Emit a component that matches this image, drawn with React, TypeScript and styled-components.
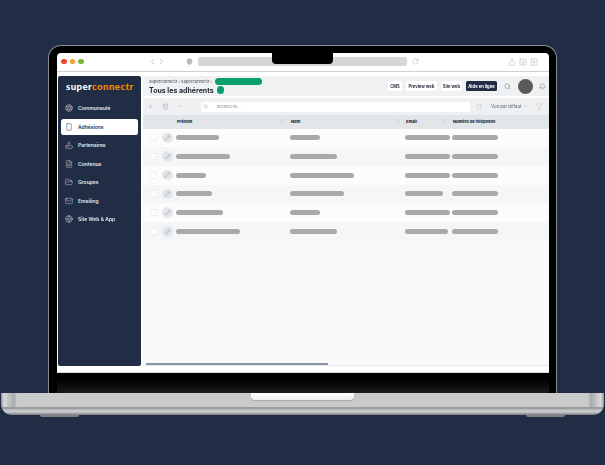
import styled, { createGlobalStyle } from "styled-components";
import {
  Aperture,
  ChevronDown,
  ChevronLeft,
  ChevronRight,
  Bell,
  Filter,
  FileText,
  Globe,
  HardDriveDownload,
  Mail,
  Minus,
  Pencil,
  Plus,
  RotateCw,
  Search,
  Share,
  Shield,
  Smartphone,
  SquareArrowDown,
  SquarePlus,
  Trash2,
  FolderOpen,
} from "lucide-react";

const GlobalStyle = createGlobalStyle`
  html, body {
    margin: 0;
    padding: 0;
    background: #212d45;
  }
  * {
    box-sizing: border-box;
  }
`;

const Page = styled.div`
  width: 605px;
  height: 465px;
  padding-top: 45px;
  background: #212d45;
  display: flex;
  flex-direction: column;
  align-items: center;
  overflow: hidden;
  font-family: "Inter", "Liberation Sans", sans-serif;
`;

const Lid = styled.div`
  position: relative;
  width: 509px;
  height: 348px;
  padding: 7px 7px 0 8px;
  background: #000;
  border: 1px solid #8b8f95;
  border-bottom: 0;
  border-radius: 13px 13px 0 0;
  display: flex;
  flex-direction: column;
`;

const Notch = styled.div`
  position: absolute;
  top: 0;
  left: 223px;
  width: 61px;
  height: 18px;
  background: #000;
  border-radius: 0 0 4px 4px;
  z-index: 2;
`;

const Screen = styled.div`
  height: 320px;
  background: #fff;
  border-radius: 4px 4px 0 0;
  display: flex;
  flex-direction: column;
  overflow: hidden;
  filter: blur(0.25px);
`;

const TitleBar = styled.div`
  height: 19px;
  flex-shrink: 0;
  border-bottom: 1px solid #cfcfcf;
  display: flex;
  align-items: center;
  padding: 0 11px 1px 4px;
  color: #8a8a8a;
`;

const Dot = styled.span<{ $c: string }>`
  width: 5.5px;
  height: 5.5px;
  margin-right: 3px;
  border-radius: 50%;
  background: ${(p) => p.$c};
`;

const NavArrows = styled.div`
  display: flex;
  margin-left: 61px;
  margin-right: 20px;
`;

const UrlBar = styled.div`
  width: 209px;
  height: 9px;
  margin: 0 5px 0 5px;
  border-radius: 2px;
  background: #d6d6d6;
`;

const WindowIcons = styled.div`
  margin-left: auto;
  display: flex;
  gap: 3px;
  color: #8c8c8c;
`;

const Body = styled.div`
  flex: 1;
  min-height: 0;
  display: flex;
  padding: 4px 0 6px 1px;
  border-bottom: 1px solid #dcdcdc;
`;

const Sidebar = styled.aside`
  width: 83px;
  flex-shrink: 0;
  background: #212d45;
  border-radius: 2px;
  padding: 0 3px;
`;

const Logo = styled.div`
  height: 24px;
  padding: 4px 0 0 5px;
  color: #fff;
  font-family: "Lato", sans-serif;
  font-size: 9.6px;
  font-weight: 900;
  letter-spacing: 0.45px;
  white-space: nowrap;
  line-height: 14px;
`;

const LogoAccent = styled.span`
  color: #f18a00;
`;

const NavList = styled.nav`
  display: flex;
  flex-direction: column;
  gap: 2.5px;
`;

const NavItem = styled.div<{ $active?: boolean }>`
  height: 16px;
  padding-left: 3.5px;
  display: flex;
  align-items: center;
  gap: 5.5px;
  border-radius: 2.5px;
  background: ${(p) => (p.$active ? "#fff" : "transparent")};
  color: ${(p) => (p.$active ? "#2b3550" : "#e6e8ec")};
  font-size: 5px;
  font-weight: 600;
  white-space: nowrap;
`;

const Main = styled.main`
  flex: 1;
  min-width: 0;
  margin-left: 2px;
  display: flex;
  flex-direction: column;
`;

const Header = styled.header`
  height: 20px;
  background: #f0f1f2;
  display: flex;
  align-items: center;
  padding: 0 3px 0 6px;
`;

const Titles = styled.div`
  display: flex;
  flex-direction: column;
  gap: 1px;
`;

const Crumbs = styled.div`
  display: flex;
  align-items: center;
  gap: 2.5px;
  height: 7px;
  color: #555c68;
  font-size: 4px;
  font-weight: 500;
  white-space: nowrap;
`;

const GreenPill = styled.span`
  width: 47px;
  height: 7px;
  flex-shrink: 0;
  border-radius: 3.5px;
  background: #0a9e6e;
`;

const TitleRow = styled.div`
  display: flex;
  align-items: center;
  gap: 3px;
  color: #252c3a;
  font-size: 7px;
  font-weight: 700;
  white-space: nowrap;
`;

const GreenDot = styled.span`
  width: 7.5px;
  height: 7.5px;
  flex-shrink: 0;
  border-radius: 50%;
  background: #0a9e6e;
`;

const HeaderActions = styled.div`
  margin-left: auto;
  display: flex;
  align-items: center;
  color: #5f6670;
`;

const ActionButton = styled.button<{ $dark?: boolean; $w: number }>`
  width: ${(p) => p.$w}px;
  height: 10px;
  padding: 0;
  margin-right: 4px;
  border: 0;
  border-radius: 1.5px;
  background: ${(p) => (p.$dark ? "#212d45" : "#fff")};
  color: ${(p) => (p.$dark ? "#fff" : "#2c3340")};
  font-family: inherit;
  font-size: 4.2px;
  font-weight: 700;
  white-space: nowrap;
`;

const SearchSlot = styled.span`
  margin-left: 3px;
  display: flex;
`;

const Avatar = styled.span`
  width: 15px;
  height: 15px;
  margin: 0 6px 0 7px;
  border-radius: 50%;
  background: #5a5a5a;
`;

const Toolbar = styled.div`
  height: 17px;
  flex-shrink: 0;
  margin-top: 2px;
  background: #eef0f2;
  display: flex;
  align-items: center;
  padding: 0 6px 0 4px;
  color: #a6acb4;
`;

const ToolIcons = styled.div`
  width: 54px;
  display: flex;
  gap: 8px;
`;

const SearchBox = styled.div`
  width: 270px;
  height: 10px;
  padding-left: 2px;
  background: #fff;
  border-radius: 1.5px;
  display: flex;
  align-items: center;
  gap: 9px;
  color: #8a8f98;
  font-size: 4px;
`;

const RefreshSlot = styled.span`
  margin-left: 6px;
  display: flex;
`;

const ViewPicker = styled.div`
  margin: 0 7px 0 9px;
  display: flex;
  align-items: center;
  gap: 1.5px;
  color: #737a85;
  font-size: 4.3px;
  font-weight: 500;
  white-space: nowrap;
`;

const columns = "12px 14px 114px 115px 47px 1fr";

const HeadRow = styled.div`
  height: 13.5px;
  flex-shrink: 0;
  padding-left: 7px;
  background: #e3e6e9;
  display: grid;
  grid-template-columns: ${columns};
  align-items: center;
  color: #252c3a;
  font-size: 4px;
  font-weight: 800;
  white-space: nowrap;
`;

const HeadCell = styled.div<{ $col: number }>`
  grid-column: ${(p) => p.$col};
  padding: 0 5px 0 1px;
  display: flex;
  align-items: center;
  justify-content: space-between;
`;

const TableBody = styled.div`
  flex: 1;
  background: #fafafa;
  display: flex;
  flex-direction: column;
`;

const Row = styled.div<{ $odd: boolean }>`
  height: 18.7px;
  padding-left: 7px;
  background: ${(p) => (p.$odd ? "#f5f6f8" : "#fcfcfc")};
  display: grid;
  grid-template-columns: ${columns};
  align-items: center;
`;

const Check = styled.span`
  width: 7px;
  height: 7px;
  background: #fff;
  border: 0.5px solid #eceef0;
  border-radius: 1px;
`;

const EditButton = styled.span`
  width: 10.5px;
  height: 10.5px;
  border-radius: 50%;
  background: #e4e7ea;
  color: #858a93;
  display: flex;
  align-items: center;
  justify-content: center;
`;

const Bar = styled.span<{ $w: number }>`
  display: block;
  width: ${(p) => p.$w}px;
  height: 5px;
  border-radius: 2.5px;
  background: #a9a9a9;
`;

const ScrollTrack = styled.div`
  height: 7px;
  padding: 4px 0 0 3px;
  background: #fafafa;
  border-bottom: 1px solid #e6e8ec;
`;

const ScrollThumb = styled.div`
  width: 182px;
  height: 2px;
  background: #8a97a8;
`;

const Chin = styled.div`
  flex: 1;
  background: linear-gradient(#000 0, #000 30%, #1b1b1b 100%);
`;

const Base = styled.div`
  width: 603px;
  height: 22px;
  flex-shrink: 0;
  display: flex;
  justify-content: center;
  border-radius: 0 0 11px 11px;
  background: linear-gradient(
      90deg,
      #8f9194 0,
      #d9dadb 3px,
      #a9abad 13px,
      #c9caca 16px,
      #c9caca calc(100% - 16px),
      #a9abad calc(100% - 13px),
      #d9dadb calc(100% - 3px),
      #8f9194 100%
    )
    top / 100% 14px no-repeat,
    linear-gradient(#c8c9c9 0, #c8c9c9 13px, #8d8e90 15px, #c4c5c6 17px, #c9cacb 19px, #77797c 22px);
`;

const Opening = styled.div`
  width: 103px;
  height: 7px;
  border-radius: 0 0 4px 4px;
  background: linear-gradient(#fff, #eeeeee);
  box-shadow: 0 0.5px 1px #8b8b8b;
`;

const Feet = styled.div`
  width: 603px;
  padding: 0 39px;
  display: flex;
  justify-content: space-between;
`;

const Foot = styled.span`
  width: 39px;
  height: 2px;
  border-radius: 0 0 6px 6px;
  background: #7d8085;
`;

const navItems = [
  { label: "Communauté", Icon: Aperture },
  { label: "Adhésions", Icon: Smartphone, active: true },
  { label: "Partenaires", Icon: HardDriveDownload },
  { label: "Contenus", Icon: FileText },
  { label: "Groupes", Icon: FolderOpen },
  { label: "Emailing", Icon: Mail },
  { label: "Site Web & App", Icon: Globe },
];

const rows = [
  [43, 30, 45, 46],
  [54, 47, 45, 46],
  [30, 64, 45, 46],
  [36, 54, 38, 46],
  [47, 30, 45, 46],
  [64, 47, 43, 46],
];

function App() {
  return (
    <Page>
      <GlobalStyle />
      <Lid>
        <Notch />
        <Screen>
          <TitleBar>
            <Dot $c="#f04438" />
            <Dot $c="#f59e2c" />
            <Dot $c="#7cb82f" />
            <NavArrows>
              <ChevronLeft size={9} strokeWidth={1.3} />
              <ChevronRight size={9} strokeWidth={1.3} />
            </NavArrows>
            <Shield size={7} strokeWidth={1.4} fill="#bdbdbd" />
            <UrlBar />
            <RotateCw size={7} strokeWidth={1.1} />
            <WindowIcons>
              <Share size={8} strokeWidth={1.1} />
              <SquareArrowDown size={8} strokeWidth={1.1} />
              <SquarePlus size={8} strokeWidth={1.1} />
            </WindowIcons>
          </TitleBar>
          <Body>
            <Sidebar>
              <Logo>
                super<LogoAccent>connectr</LogoAccent>
              </Logo>
              <NavList>
                {navItems.map(({ label, Icon, active }) => (
                  <NavItem key={label} $active={active}>
                    <Icon size={8} strokeWidth={1.3} />
                    {label}
                  </NavItem>
                ))}
              </NavList>
            </Sidebar>
            <Main>
              <Header>
                <Titles>
                  <Crumbs>
                    Superconnectr › Superconnectr ›<GreenPill />
                  </Crumbs>
                  <TitleRow>
                    Tous les adhérents
                    <GreenDot />
                  </TitleRow>
                </Titles>
                <HeaderActions>
                  <ActionButton $w={14}>CMS</ActionButton>
                  <ActionButton $w={31}>Preview web</ActionButton>
                  <ActionButton $w={21}>Site web</ActionButton>
                  <ActionButton $w={31} $dark>
                    Aide en ligne
                  </ActionButton>
                  <SearchSlot>
                    <Search size={7} strokeWidth={1.4} />
                  </SearchSlot>
                  <Avatar />
                  <Bell size={7} strokeWidth={1.4} />
                </HeaderActions>
              </Header>
              <Toolbar>
                <ToolIcons>
                  <Plus size={7} strokeWidth={1.4} />
                  <Trash2 size={7} strokeWidth={1.4} />
                  <Minus size={6} strokeWidth={1.4} />
                </ToolIcons>
                <SearchBox>
                  <Search size={5} strokeWidth={1.5} />
                  Recherche...
                </SearchBox>
                <RefreshSlot>
                  <RotateCw size={6} strokeWidth={1.3} />
                </RefreshSlot>
                <ViewPicker>
                  Vue par défaut
                  <ChevronDown size={5} strokeWidth={1.3} />
                </ViewPicker>
                <Filter size={8} strokeWidth={1} />
              </Toolbar>
              <HeadRow>
                <HeadCell $col={3}>
                  Prénom
                  <Filter size={5} strokeWidth={1} color="#a6acb4" />
                </HeadCell>
                <HeadCell $col={4}>
                  Nom
                  <Filter size={5} strokeWidth={1} color="#a6acb4" />
                </HeadCell>
                <HeadCell $col={5}>
                  Email
                  <Filter size={5} strokeWidth={1} color="#a6acb4" />
                </HeadCell>
                <HeadCell $col={6}>Numéro de téléphone</HeadCell>
              </HeadRow>
              <TableBody>
                {rows.map((row, i) => (
                  <Row key={i} $odd={i % 2 === 1}>
                    <Check />
                    <EditButton>
                      <Pencil size={5.5} strokeWidth={1.6} />
                    </EditButton>
                    {row.map((w, j) => (
                      <Bar key={j} $w={w} />
                    ))}
                  </Row>
                ))}
              </TableBody>
              <ScrollTrack>
                <ScrollThumb />
              </ScrollTrack>
            </Main>
          </Body>
        </Screen>
        <Chin />
      </Lid>
      <Base>
        <Opening />
      </Base>
      <Feet>
        <Foot />
        <Foot />
      </Feet>
    </Page>
  );
}

export default App;
